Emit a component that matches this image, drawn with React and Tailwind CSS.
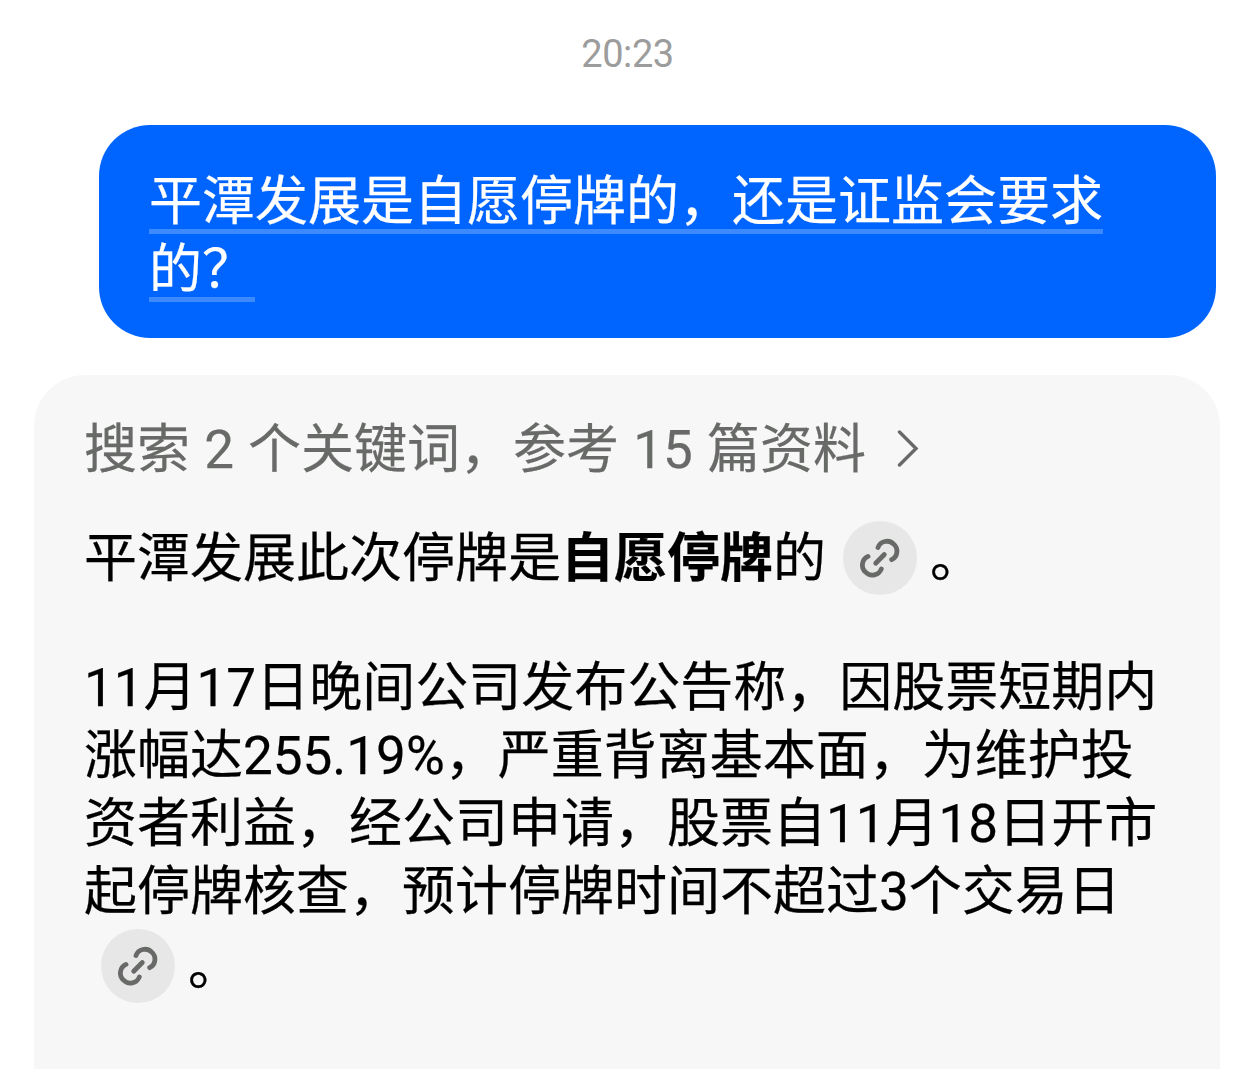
import React from "react"

const questionLines = ["平潭发展是自愿停牌的，还是证监会要求", "的"]

const answerLines = [
  "11月17日晚间公司发布公告称，因股票短期内",
  "涨幅达255.19%，严重背离基本面，为维护投",
  "资者利益，经公司申请，股票自11月18日开市",
  "起停牌核查，预计停牌时间不超过3个交易日",
]

const SourceLink = () => (
  <button className="mr-[13px] ml-[17px] h-[74px] w-[74px] shrink-0 rounded-full bg-[#e7e7e7] text-[#686a68]">
    <svg viewBox="0 0 74 74" fill="none" stroke="currentColor" strokeWidth="4.8" strokeLinecap="round">
      <path d="M35 26.5A9.5 9.5 0 0 1 50.6 23A9.5 9.5 0 0 1 48.7 38.7" />
      <path d="M25 35.4A9.5 9.5 0 0 0 22.6 51.2A9.5 9.5 0 0 0 38.3 48" />
      <path d="M32.7 42.3L41.3 33.5" />
    </svg>
  </button>
)

const UserMessage = () => (
  <div className="mt-[35px] ml-[99px] h-[213px] w-[1117px] rounded-[51px] bg-[#0065ff] px-[50px] pt-[41px] text-white">
    <div className="flex flex-col items-start">
      <span className="h-[68px] border-b-[5px] border-[#3d8aff] leading-[72px] whitespace-nowrap">
        {questionLines[0]}
      </span>
      <span className="flex h-[68px] border-b-[5px] border-[#3d8aff] leading-[72px] whitespace-nowrap">
        {questionLines[1]}
        <span>？</span>
      </span>
    </div>
  </div>
)

const AssistantMessage = () => (
  <div className="mt-[37px] ml-[34px] h-[694px] w-[1186px] rounded-t-[51px] bg-[#f7f7f7] pt-[42px] pl-[50px] text-black">
    <div className="flex h-[68px] items-center text-[#686a68]">
      <span className="[word-spacing:1px] whitespace-nowrap">搜索 2 个关键词，参考 15 篇资料</span>
      <svg className="mb-1.5 ml-[30px] h-[38px] w-[24px]" viewBox="0 0 24 38" fill="none" stroke="currentColor" strokeWidth="3.4" strokeLinecap="round">
        <path d="M3.5 3L20 19.5L3.5 36" />
      </svg>
    </div>

    <div className="mt-[36px] flex h-[74px] items-center whitespace-nowrap">
      <p className="pt-[3px]">
        平潭发展此次停牌是<strong className="font-bold">自愿停牌</strong>的
      </p>
      <SourceLink />
      <span className="pt-[3px]">。</span>
    </div>

    <div className="mt-[59px] leading-[68px] whitespace-nowrap">
      {answerLines.map((line) => (
        <p key={line}>{line}</p>
      ))}
    </div>
    <div className="mt-[3px] flex h-[74px] items-center">
      <SourceLink />
      <span className="pt-[3px]">。</span>
    </div>
  </div>
)

const App = () => {
  return (
    <div className="flex h-[1069px] w-[1257px] flex-col overflow-hidden bg-white font-[Roboto,'Noto_Sans_CJK_SC',sans-serif] text-[53px] [-webkit-text-stroke:0.25px]">
      <div className="mt-[18px] h-[72px] pr-[2px] text-center text-[38px] leading-[72px] tracking-[-0.4px] text-[#9c9c9c] [-webkit-text-stroke:0]">
        20:23
      </div>
      <UserMessage />
      <AssistantMessage />
    </div>
  )
}

export default App
